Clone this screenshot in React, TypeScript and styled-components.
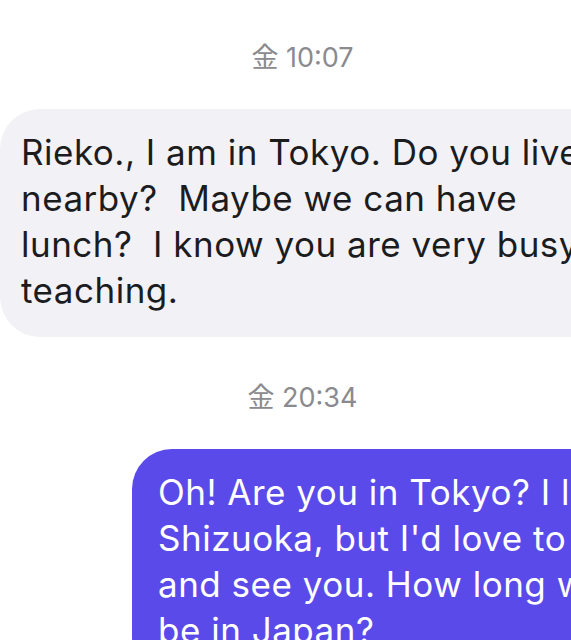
import React, {FC} from "react";
import styled, {createGlobalStyle} from "styled-components";

type Message = {
    time: string
    mine: boolean
    text: string
}

// line breaks follow the wrapping of the original bubbles
const messages: Message[] = [
    {
        time: "金 10:07",
        mine: false,
        text: "Rieko., I am in Tokyo. Do you live\nnearby?  Maybe we can have\nlunch?  I know you are very busy\nteaching.",
    },
    {
        time: "金 20:34",
        mine: true,
        text: "Oh! Are you in Tokyo? I live in\nShizuoka, but I'd love to come\nand see you. How long will you\nbe in Japan?",
    },
]

const App: FC = () => {
    return (
        <>
            <GlobalStyle/>
            <Thread>
                {messages.map((m, i) => (
                    <Group key={i}>
                        <Stamp>{m.time}</Stamp>
                        <Row $mine={m.mine}>
                            <Bubble $mine={m.mine}>{m.text}</Bubble>
                        </Row>
                    </Group>
                ))}
            </Thread>
        </>
    )
}

const GlobalStyle = createGlobalStyle`
  html, body {
    margin: 0;
    padding: 0;
    background: #ffffff;
    overflow: hidden;
  }
  body {
    font-family: Inter, "Noto Sans CJK JP", sans-serif;
    -webkit-font-smoothing: antialiased;
  }
`

const Thread = styled.div`
  width: 571px;
  height: 640px;
  overflow: hidden;
  display: flex;
  flex-direction: column;
  padding-top: 41px;
  box-sizing: border-box;
  gap: 44px;
`

const Group = styled.div`
  display: flex;
  flex-direction: column;
  gap: 34px;
`

const Stamp = styled.div`
  text-align: center;
  color: #8a8a8f;
  font-size: 27px;
  line-height: 34px;
  padding-left: 34px;
`

const Row = styled.div<{ $mine: boolean }>`
  display: flex;
  justify-content: flex-start;
  padding-left: ${p => p.$mine ? "132px" : "0"};
  width: 720px;
  box-sizing: border-box;
`

const Bubble = styled.div<{ $mine: boolean }>`
  box-sizing: border-box;
  width: 640px;
  flex: none;
  border-radius: 40px;
  padding: ${p => p.$mine ? "20px 20px 24px 26px" : "20px 20px 24px 21px"};
  background: ${p => p.$mine ? "#5a4ae9" : "#f2f2f6"};
  color: ${p => p.$mine ? "#ffffff" : "#1c1c1e"};
  font-size: 35px;
  line-height: 46px;
  letter-spacing: 0.5px;
  white-space: pre;
`

export default App
